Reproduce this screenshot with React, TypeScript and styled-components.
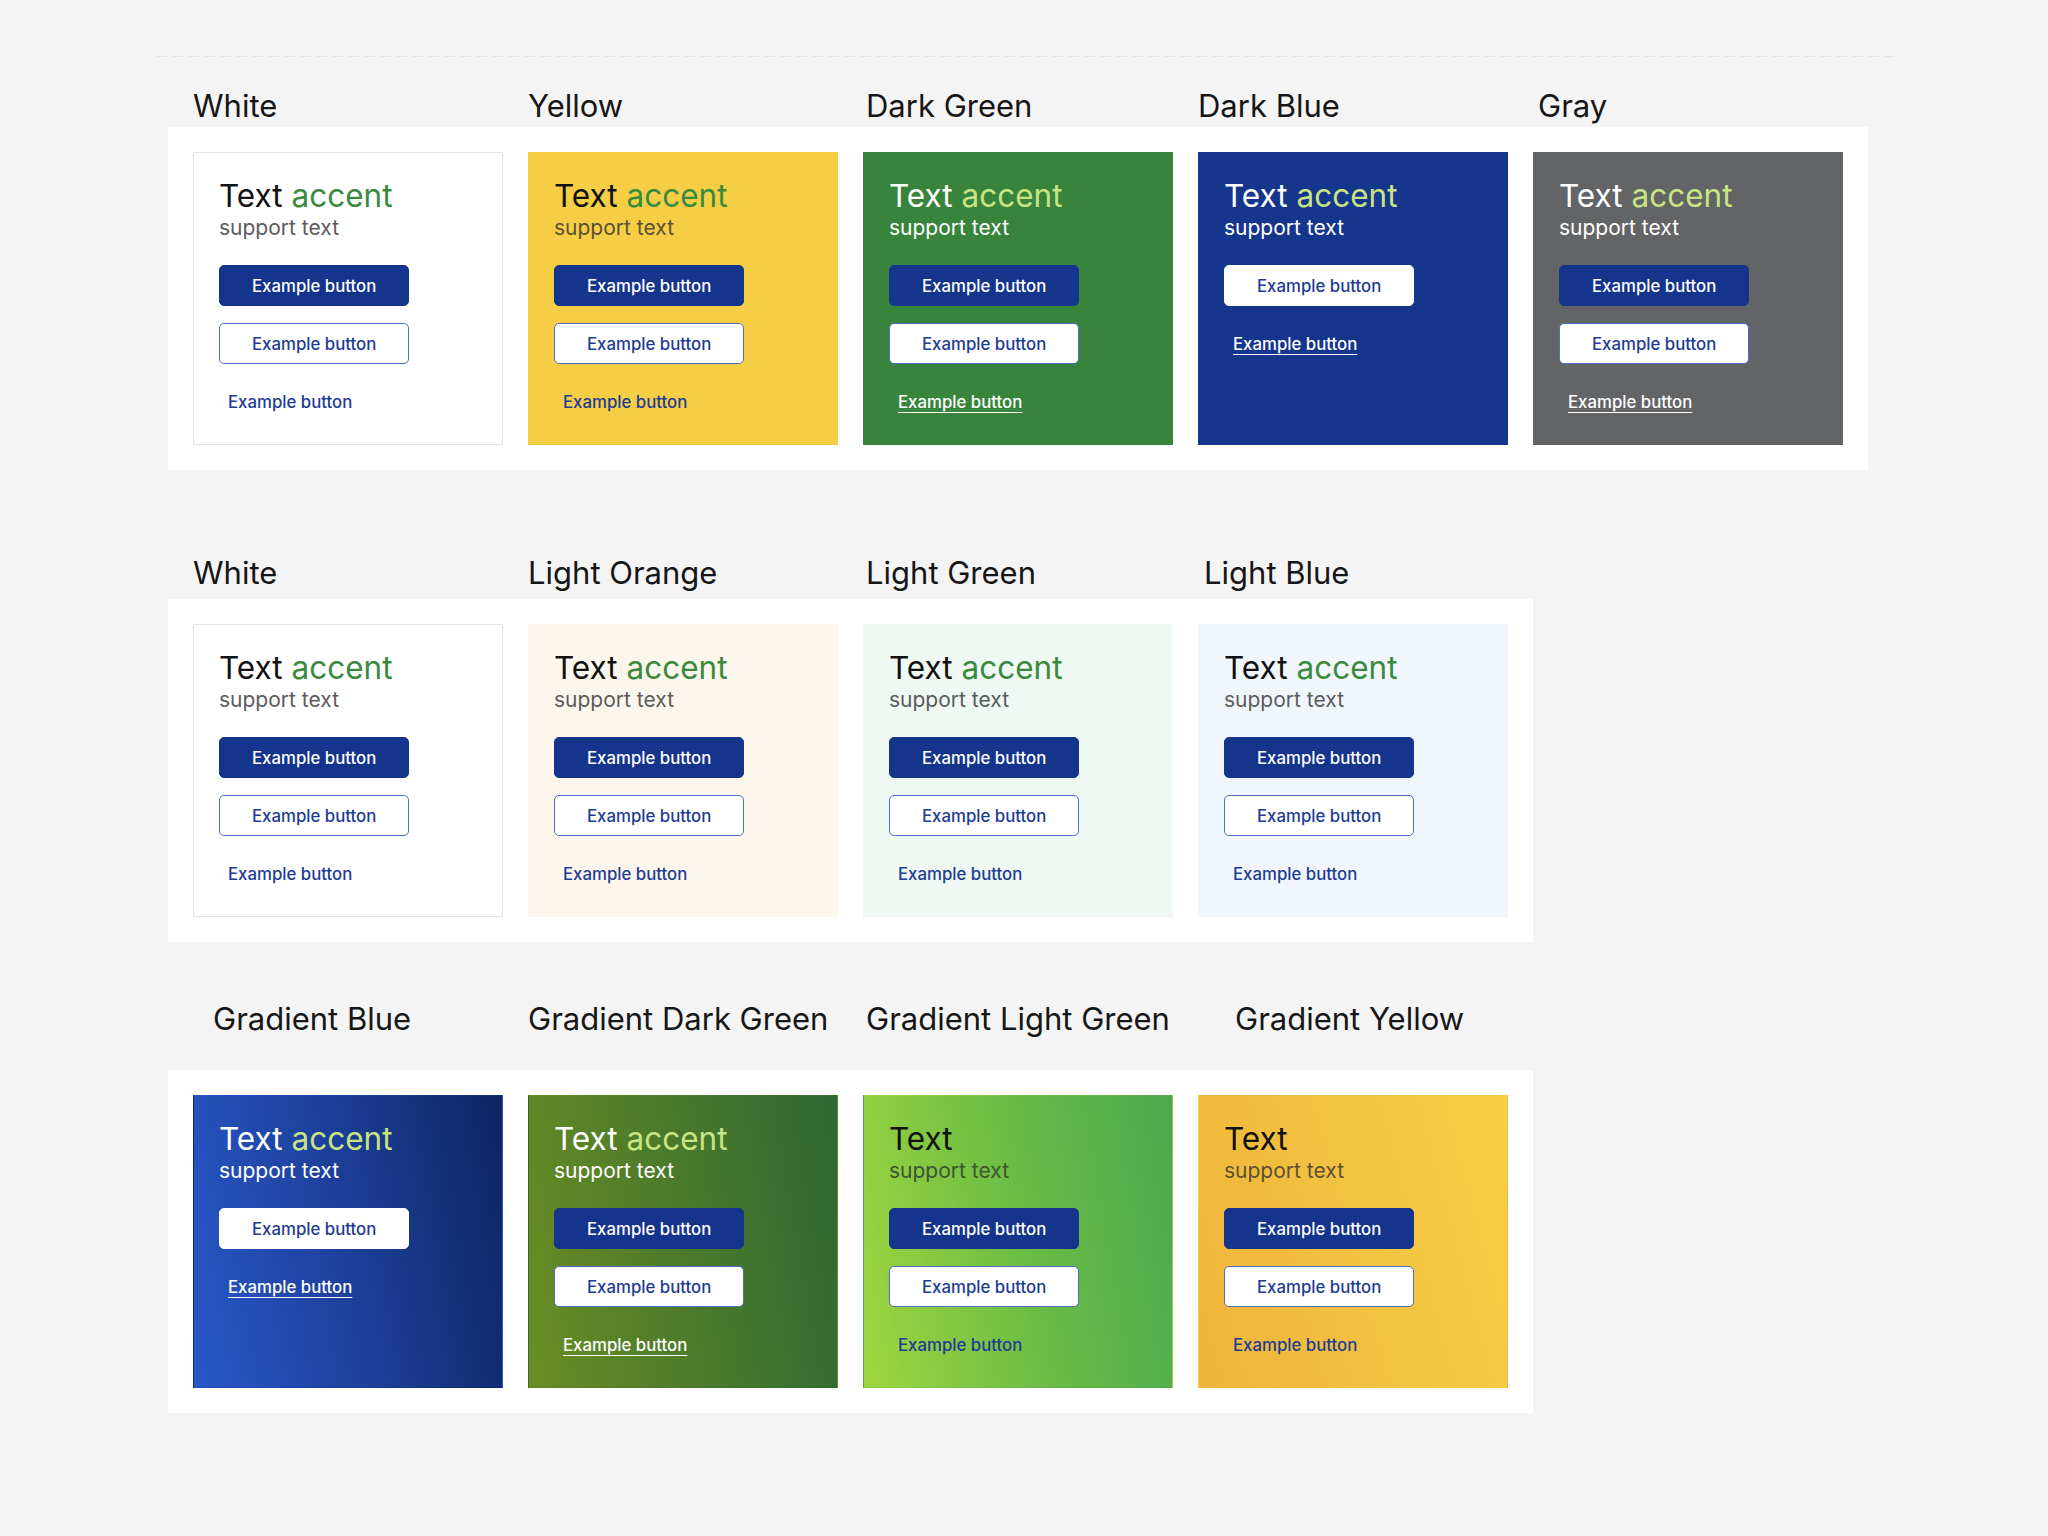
import React from "react";
import styled, { createGlobalStyle, css } from "styled-components";

type ButtonKind = "filled" | "outline" | "white" | "link" | "linkLight";

interface CardSpec {
  label: string;
  indent?: number;
  bg: string;
  bordered?: boolean;
  dark?: boolean;
  accent?: boolean;
  supportColor?: string;
  buttons: ButtonKind[];
}

interface SectionSpec {
  top: number;
  labelGap: number;
  cards: CardSpec[];
}

const GlobalStyle = createGlobalStyle`
  html, body {
    margin: 0;
    padding: 0;
    background: #f4f4f4;
  }
  body {
    font-family: Inter, "Liberation Sans", Arial, sans-serif;
    color: #111111;
  }
`;

const Page = styled.div`
  box-sizing: border-box;
  min-height: 100vh;
  overflow: hidden;
`;

const Divider = styled.div`
  margin: 56px 0 0 157px;
  width: 1737px;
  height: 1px;
  background: repeating-linear-gradient(to right, #e2e1ef 0 10px, transparent 10px 16px);
`;

const Section = styled.section<{ $top: number }>`
  margin: ${(p) => p.$top}px 0 0 168px;
`;

const LabelRow = styled.div<{ $cols: number; $gap: number }>`
  display: grid;
  grid-template-columns: repeat(${(p) => p.$cols}, 310px);
  column-gap: 25px;
  padding: 0 25px;
  margin-bottom: ${(p) => p.$gap}px;
`;

const Label = styled.h2<{ $indent: number }>`
  margin: 0;
  padding-left: ${(p) => p.$indent}px;
  font-size: 31px;
  line-height: 36px;
  font-weight: 400;
  color: #161616;
  white-space: nowrap;
`;

const Panel = styled.div<{ $cols: number }>`
  display: grid;
  grid-template-columns: repeat(${(p) => p.$cols}, 310px);
  gap: 25px;
  padding: 25px;
  width: fit-content;
  background: #ffffff;
`;

const Card = styled.div<{ $bg: string; $bordered?: boolean }>`
  box-sizing: border-box;
  display: flex;
  flex-direction: column;
  align-items: flex-start;
  padding: 25px 25px 22px;
  min-height: 293px;
  background: ${(p) => p.$bg};
  border: 1px solid ${(p) => (p.$bordered ? "#e3e3ea" : "transparent")};
`;

const Title = styled.div<{ $dark?: boolean }>`
  font-size: 31.5px;
  line-height: 36px;
  color: ${(p) => (p.$dark ? "#ffffff" : "#111111")};
`;

const Accent = styled.span<{ $dark?: boolean }>`
  color: ${(p) => (p.$dark ? "#c8e482" : "#3a8a3e")};
`;

const Support = styled.div<{ $color: string }>`
  font-size: 21px;
  line-height: 28px;
  color: ${(p) => p.$color};
`;

const ButtonStack = styled.div`
  display: flex;
  flex-direction: column;
  align-items: flex-start;
  gap: 17px;
  margin-top: 23px;
`;

const kindStyles: Record<ButtonKind, ReturnType<typeof css>> = {
  filled: css`
    background: #14358b;
    border-color: #14358b;
    color: #ffffff;
  `,
  outline: css`
    background: #ffffff;
    border-color: #4e6fbf;
    color: #1d3c93;
  `,
  white: css`
    background: #ffffff;
    border-color: #ffffff;
    color: #1d3c93;
  `,
  link: css`
    background: transparent;
    border-color: transparent;
    color: #1d3c93;
    padding: 0 8px;
  `,
  linkLight: css`
    background: transparent;
    border-color: transparent;
    color: #ffffff;
    padding: 0 8px;
    text-decoration: underline;
    text-underline-offset: 4px;
    text-decoration-thickness: 1px;
  `,
};

const ExampleButton = styled.button<{ $kind: ButtonKind }>`
  box-sizing: border-box;
  display: inline-flex;
  align-items: center;
  justify-content: center;
  height: 41px;
  padding: 0 32px;
  border: 1px solid transparent;
  border-radius: 5px;
  font-family: Inter, "Liberation Sans", Arial, sans-serif;
  font-size: 16.8px;
  font-weight: 500;
  cursor: pointer;
  ${(p) => kindStyles[p.$kind]}
`;

const LIGHT_SUPPORT = "#5b5b5e";
const full: ButtonKind[] = ["filled", "outline", "link"];
const fullOnDark: ButtonKind[] = ["filled", "outline", "linkLight"];

const sections: SectionSpec[] = [
  {
    top: 31,
    labelGap: 3,
    cards: [
      { label: "White", bg: "#ffffff", bordered: true, accent: true, buttons: full },
      { label: "Yellow", indent: -4, bg: "#f6ce46", accent: true, supportColor: "#5a5037", buttons: full },
      { label: "Dark Green", indent: 3, bg: "#39843c", dark: true, accent: true, buttons: fullOnDark },
      { label: "Dark Blue", bg: "#15368c", dark: true, accent: true, buttons: ["white", "linkLight"] },
      { label: "Gray", indent: 5, bg: "#636466", dark: true, accent: true, buttons: fullOnDark },
    ],
  },
  {
    top: 85,
    labelGap: 8,
    cards: [
      { label: "White", bg: "#ffffff", bordered: true, accent: true, buttons: full },
      { label: "Light Orange", indent: -4, bg: "#fdf6ec", accent: true, buttons: full },
      { label: "Light Green", indent: 3, bg: "#eff8f2", accent: true, buttons: full },
      { label: "Light Blue", indent: 6, bg: "#f1f6fd", accent: true, buttons: full },
    ],
  },
  {
    top: 59,
    labelGap: 33,
    cards: [
      {
        label: "Gradient Blue",
        indent: 20,
        bg: "linear-gradient(80deg, #2a58c9 0%, #1c3f99 50%, #0e2563 100%)",
        dark: true,
        accent: true,
        buttons: ["white", "linkLight"],
      },
      {
        label: "Gradient Dark Green",
        indent: -4,
        bg: "linear-gradient(80deg, #6a8d24 0%, #4b7a2b 50%, #2d6833 100%)",
        dark: true,
        accent: true,
        buttons: fullOnDark,
      },
      {
        label: "Gradient Light Green",
        indent: 3,
        bg: "linear-gradient(80deg, #9fd63f 0%, #6dbd45 50%, #4aa94f 100%)",
        supportColor: "#3d5531",
        buttons: full,
      },
      {
        label: "Gradient Yellow",
        indent: 37,
        bg: "linear-gradient(75deg, #efb43a 0%, #f3c342 55%, #f7cf46 100%)",
        supportColor: "#5e5030",
        buttons: full,
      },
    ],
  },
];

const ColorCard: React.FC<{ card: CardSpec }> = ({ card }) => (
  <Card $bg={card.bg} $bordered={card.bordered}>
    <Title $dark={card.dark}>
      Text{card.accent && <Accent $dark={card.dark}> accent</Accent>}
    </Title>
    <Support $color={card.dark ? "#ffffff" : card.supportColor || LIGHT_SUPPORT}>support text</Support>
    <ButtonStack>
      {card.buttons.map((kind, i) => (
        <ExampleButton key={i} $kind={kind}>
          Example button
        </ExampleButton>
      ))}
    </ButtonStack>
  </Card>
);

export default function App() {
  return (
    <Page>
      <GlobalStyle />
      <Divider />
      {sections.map((section, s) => (
        <Section key={s} $top={section.top}>
          <LabelRow $cols={section.cards.length} $gap={section.labelGap}>
            {section.cards.map((card) => (
              <Label key={card.label} $indent={card.indent || 0}>
                {card.label}
              </Label>
            ))}
          </LabelRow>
          <Panel $cols={section.cards.length}>
            {section.cards.map((card) => (
              <ColorCard key={card.label} card={card} />
            ))}
          </Panel>
        </Section>
      ))}
    </Page>
  );
}
